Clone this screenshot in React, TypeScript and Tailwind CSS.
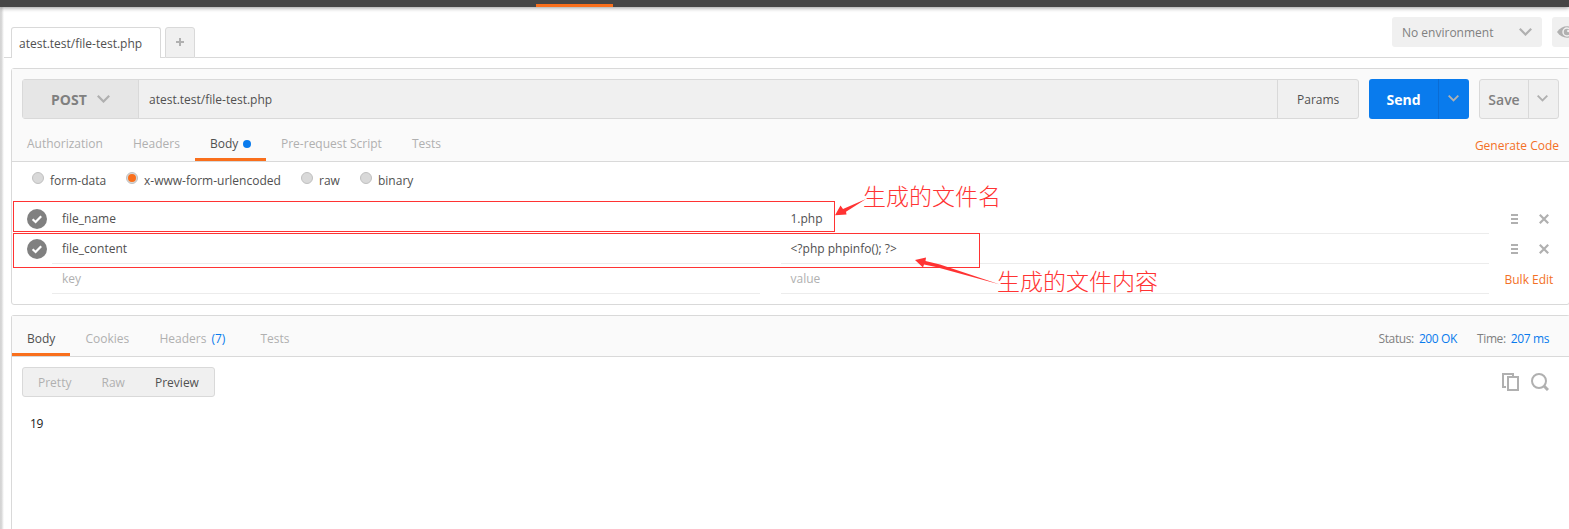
import type { ReactNode } from "react";

function Chevron({ className, w = 12 }: { className?: string; w?: number }) {
  return (
    <svg width={w} height={w * 0.62} viewBox="0 0 13 8" className={className} fill="none" stroke="currentColor" strokeWidth="2.2">
      <path d="M0.8 0.8 L6.5 6.5 L12.2 0.8" />
    </svg>
  );
}

function Radio({ label, on, className }: { label: string; on?: boolean; className: string }) {
  return (
    <label className={`flex shrink-0 ${className}`}>
      <span className="flex size-3 items-center justify-center rounded-full border border-[#c0c0c0] bg-[#d9d9d9]">
        {on && <span className="size-2 shrink-0 rounded-full bg-[#f96f1c]" />}
      </span>
      <span className="ml-1.5 leading-[18px]">{label}</span>
    </label>
  );
}

function Row({ name, value, empty }: { name: string; value: string; empty?: boolean }) {
  const tone = empty ? "text-[#b0b0b0]" : "text-[#505050]";
  return (
    <div className={`flex h-[30px] ${tone}`}>
      <div className="flex w-10 items-center pl-[15px]">
        {!empty && (
          <svg width="20" height="20" viewBox="0 0 20 20" className="shrink-0">
            <circle cx="10" cy="10" r="10" fill="#808080" />
            <path d="M5.6 10.2 L8.6 13 L14.2 7.2" fill="none" stroke="#fff" strokeWidth="2.2" />
          </svg>
        )}
      </div>
      <div className="w-[708px] border-b border-[#ececec] pl-2.5 leading-[30px]">{name}</div>
      <div className="ml-[21px] w-[708px] border-b border-[#ececec] pl-[9.5px] leading-[30px]">{value}</div>
      {empty ? (
        <span className="ml-[15.5px] leading-8 text-[#f37026]">Bulk Edit</span>
      ) : (
        <div className="ml-[22px] flex items-center gap-[21px]">
          <svg width="7" height="10" viewBox="0 0 7 10" fill="#b0b0b0">
            <path d="M0 0h7v2H0zM0 4h7v2H0zM0 8h7v2H0z" />
          </svg>
          <svg width="10" height="10" viewBox="0 0 10 10" stroke="#b0b0b0" strokeWidth="2.2">
            <path d="M0.8 0.8 L9.2 9.2 M9.2 0.8 L0.8 9.2" />
          </svg>
        </div>
      )}
    </div>
  );
}

function Tab({ children, className }: { children: ReactNode; className: string }) {
  return <div className={`flex shrink-0 items-center whitespace-nowrap ${className}`}>{children}</div>;
}

export default function App() {
  return (
    <div className="relative h-[529px] w-full overflow-hidden bg-white font-['Open_Sans','Noto_Sans_CJK_SC',sans-serif] text-xs text-[#505050]">
      <header className="relative z-10 flex h-[7px] items-end bg-[#464646] pl-[536px] shadow-[0_1px_4px_rgba(0,0,0,0.4)]">
        <div className="h-[3px] w-[77px] bg-[#f96f1c]" />
      </header>
      <div className="flex h-[522px]">
        <div className="w-1 shrink-0 bg-gradient-to-r from-[#d4d4d4] from-30% to-white" />
        <main className="min-w-0 flex-1">
          <div className="flex h-[51px] items-end">
            <div className="h-full w-[7px] border-b border-[#d9d9d9]" />
            <div className="h-[31px] w-[150px] rounded-t-[3px] border border-b-0 border-[#d9d9d9] pl-[7px] leading-[31px]">atest.test/file-test.php</div>
            <div className="h-full w-1 border-b border-[#d9d9d9]" />
            <div className="flex h-[31px] w-[30px] items-center justify-center rounded-t-[3px] border border-[#d9d9d9] bg-[#f0f0f0] pb-0.5">
              <svg width="8" height="8" viewBox="0 0 8 8" fill="#b0b0b0">
                <path d="M3 0h2v3h3v2H5v3H3V5H0V3h3z" />
              </svg>
            </div>
            <div className="flex h-full flex-1 items-start justify-end gap-2.5 overflow-hidden border-b border-[#d9d9d9] pt-2.5">
              <div className="flex h-[30px] w-[150px] items-center justify-between rounded-[3px] bg-[#f0f0f0] pr-2.5 pl-2.5 text-[#808080]">
                <span className="pt-0.5">No environment</span>
                <Chevron className="text-[#b0b0b0]" w={13} />
              </div>
              <div className="flex h-[30px] w-[17px] items-center overflow-hidden rounded-l-[3px] bg-[#f0f0f0] pl-[5px]">
                <svg width="20" height="12" viewBox="0 0 20 12" className="shrink-0">
                  <path d="M0 6 C5 -1.6 15 -1.6 20 6 C15 13.6 5 13.6 0 6Z" fill="#b0b0b0" />
                  <circle cx="10" cy="6" r="4" fill="none" stroke="#f0f0f0" strokeWidth="1.5" />
                  <circle cx="11.3" cy="5" r="1.2" fill="#f0f0f0" />
                </svg>
              </div>
            </div>
          </div>

          <section className="mt-2.5 -mr-px ml-[7px] h-[237px] rounded-[3px] border border-[#d9d9d9]">
            <div className="h-[93px] border-b border-[#d9d9d9] bg-[#fafafa]">
              <div className="flex h-[50px] pt-2.5 pl-2.5">
                <div className="flex h-10 w-[1337px] rounded-[3px] border border-[#d9d9d9] bg-[#f0f0f0]">
                  <div className="flex w-[116px] items-center border-r border-[#d9d9d9] bg-[#e6e6e6] pl-7 text-sm font-bold text-[#808080]">
                    <span className="pt-0.5">POST</span>
                    <Chevron className="ml-2.5 text-[#b0b0b0]" w={13} />
                  </div>
                  <div className="flex-1 pl-2.5 leading-10">atest.test/file-test.php</div>
                  <div className="w-[81px] border-l border-[#d9d9d9] pl-[19px] leading-10">Params</div>
                </div>
                <div className="ml-2.5 flex h-10 w-[100px] overflow-hidden rounded-[3px] bg-[#097bed] text-white">
                  <div className="w-[69px] text-center text-sm leading-[42px] font-bold">Send</div>
                  <div className="flex flex-1 items-center justify-center border-l border-[#0a6cd4] pr-0.5 pb-px">
                    <Chevron className="text-[#b0b0b0]" w={11} />
                  </div>
                </div>
                <div className="ml-2.5 flex h-10 w-20 rounded-[3px] border border-[#d9d9d9] bg-[#f0f0f0] text-[#808080]">
                  <div className="w-12 text-center text-sm leading-10 font-semibold">Save</div>
                  <div className="flex flex-1 items-center justify-center border-l border-[#d9d9d9] pr-0.5 pb-px">
                    <Chevron className="text-[#b0b0b0]" w={11} />
                  </div>
                </div>
              </div>
              <nav className="flex h-[42px] pt-2 text-[#b0b0b0]">
                <Tab className="w-[106px] pl-[15px]">Authorization</Tab>
                <Tab className="w-[77px] pl-[15px]">Headers</Tab>
                <Tab className="w-[71px] border-b-[3px] border-[#f96f1c] pt-[3px] pl-[15px] text-[#505050]">
                  Body
                  <span className="ml-[5px] size-2 rounded-full bg-[#097bed]" />
                </Tab>
                <Tab className="w-[131px] pl-[15px]">Pre-request Script</Tab>
                <Tab className="pl-[15px]">Tests</Tab>
                <Tab className="mr-2.5 ml-auto pt-1 text-[#f37026]">Generate Code</Tab>
              </nav>
            </div>
            <div className="flex h-[42px] pt-2.5">
              <Radio className="ml-5 w-[94px]" label="form-data" />
              <Radio className="w-[175px]" label="x-www-form-urlencoded" on />
              <Radio className="w-[59px]" label="raw" />
              <Radio className="" label="binary" />
            </div>
            <Row name="file_name" value="1.php" />
            <Row name="file_content" value="<?php phpinfo(); ?>" />
            <Row name="key" value="value" empty />
          </section>

          <section className="mt-2.5 -mr-px ml-[7px] h-[230px] rounded-t-[3px] border border-b-0 border-[#d9d9d9]">
            <nav className="flex h-[41px] border-b border-[#d9d9d9] bg-[#fafafa] pt-1.5 text-[#b0b0b0]">
              <Tab className="w-[58px] border-b-[3px] border-[#f96f1c] pt-[3px] pl-[15px] text-[#505050]">Body</Tab>
              <Tab className="w-[74px] pl-[15.5px]">Cookies</Tab>
              <Tab className="w-[101px] pl-[15.5px]">
                Headers <span className="ml-[5px] text-[#097bed]">(7)</span>
              </Tab>
              <Tab className="pl-[15.5px]">Tests</Tab>
              <Tab className="mr-5 ml-auto tracking-[-0.38px] text-[#808080]">
                Status: <span className="mr-5 ml-[5px] text-[#097bed]">200 OK</span>
                Time: <span className="ml-[5px] text-[#097bed]">207 ms</span>
              </Tab>
            </nav>
            <div className="flex items-start justify-between pt-2.5 pr-5 pl-2.5">
              <div className="flex h-[30px] w-[193px] rounded-[3px] border border-[#d9d9d9] bg-[#f0f0f0] pl-[15px] leading-[30px] text-[#b0b0b0]">
                <span className="w-[63.5px]">Pretty</span>
                <span className="w-[53.5px]">Raw</span>
                <span className="text-[#505050]">Preview</span>
              </div>
              <div className="mt-1.5 flex gap-3">
                <svg width="17" height="18" viewBox="0 0 17 18" fill="none" stroke="#b0b0b0" strokeWidth="2">
                  <path d="M4 14H1V1h10v2" />
                  <path d="M6 4h10v13H6z" />
                </svg>
                <svg width="18" height="18" viewBox="0 0 18 18" fill="none" stroke="#b0b0b0">
                  <circle cx="8" cy="8" r="7" strokeWidth="2" />
                  <path d="M13 13 L17 17" strokeWidth="3" />
                </svg>
              </div>
            </div>
            <div className="pt-[19px] pl-[18px] leading-4 tracking-[-0.4px] text-[#202020]">19</div>
          </section>
        </main>
      </div>

      <div className="absolute top-[201px] left-[13px] z-20 h-[31px] w-[822px] border border-[#f33]" />
      <div className="absolute top-[233px] left-[13px] z-20 h-[35px] w-[967px] border border-[#f33]" />
      <svg className="absolute top-0 left-0 z-20" width="1569" height="529" fill="#f33">
        <path d="M835 215.3 L840.5 205.5 L843 209 L866 199 L846 211.8 L846.5 214.5 Z" />
        <path d="M915 260 L926 257.5 L925.5 261 L940 264.5 L1000 284.5 L936 267 L924 264.5 L923 267.5 Z" />
      </svg>
      <div className="absolute top-[178px] left-[863px] z-20 font-['Noto_Sans_CJK_SC',sans-serif] text-[23px] leading-[34px] font-light whitespace-nowrap text-[#f33]">生成的文件名</div>
      <div className="absolute top-[263px] left-[997px] z-20 font-['Noto_Sans_CJK_SC',sans-serif] text-[23px] leading-[34px] font-light whitespace-nowrap text-[#f33]">生成的文件内容</div>
    </div>
  );
}
